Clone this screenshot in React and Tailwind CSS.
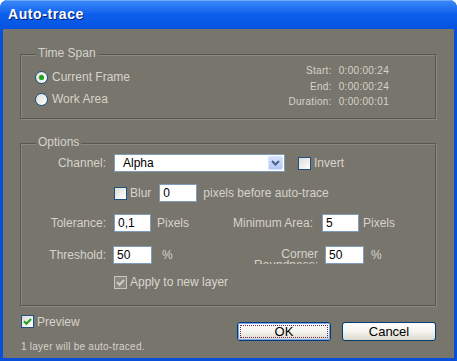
import React from "react";

const F = { fontFamily: '"Liberation Sans", Arial, sans-serif' };

function Radio({ checked }) {
  return (
    <div className="w-[13px] h-[13px] rounded-full border border-[#1c5180] bg-gradient-to-br from-[#dcdcd7] to-white flex items-center justify-center shrink-0">
      {checked && <div className="w-[5px] h-[5px] rounded-full bg-[#21a121] shadow-[0_0_1px_#6ad66a]" />}
    </div>
  );
}

function Check({ checked, disabled }) {
  if (disabled) {
    return (
      <div className="w-[13px] h-[13px] border border-[#c9c6bd] bg-[#8b887f] flex items-center justify-center shrink-0">
        <svg width="9" height="9" viewBox="0 0 9 9">
          <path d="M1 4.2 L3.5 6.7 L8 2" fill="none" stroke="#cfccc3" strokeWidth="2" />
        </svg>
      </div>
    );
  }
  return (
    <div className="w-[13px] h-[13px] border border-[#1c5180] bg-gradient-to-br from-[#dcdcd7] to-white flex items-center justify-center shrink-0">
      {checked && (
        <svg width="9" height="9" viewBox="0 0 9 9">
          <path d="M1 4.2 L3.5 6.7 L8 2" fill="none" stroke="#21a121" strokeWidth="2" />
        </svg>
      )}
    </div>
  );
}

function Input({ value, w }) {
  return (
    <div
      className={`h-[18px] bg-white border border-[#7f9db9] text-black text-[12px] leading-[16px] pl-[3px] shrink-0 ${w}`}
    >
      {value}
    </div>
  );
}

function Btn({ children, def }) {
  return (
    <div className="w-[94px] h-[19px] rounded-[3px] border border-[#003c74] bg-gradient-to-b from-white via-[#f4f3ee] to-[#dcd9cc] text-black text-[13px] flex items-center justify-center relative">
      {def && (
        <div className="absolute inset-0 rounded-[2px] shadow-[inset_0_0_0_1px_#7aa6ee]">
          <div className="absolute inset-[2px] border border-dotted border-[#6b2a4a]" />
        </div>
      )}
      <span className="relative leading-none">{children}</span>
    </div>
  );
}

export default function App() {
  return (
    <div className="w-[457px] h-[361px] bg-white" style={F}>
      <div className="w-[457px] h-[361px] rounded-t-[8px] bg-[#0a4fd9] flex flex-col overflow-hidden">
        {/* title bar */}
        <div className="h-[29px] shrink-0 bg-gradient-to-b from-[#3d8af7] via-[#0b5fec] to-[#0553e0] flex items-center pl-[8px] shadow-[inset_0_1px_0_#6fa8ff]">
          <span className="text-white font-bold text-[14px] tracking-[0.6px] [text-shadow:1px_1px_0_#0a1e6e]">
            Auto-trace
          </span>
        </div>
        {/* body */}
        <div className="flex-1 mx-[3px] mb-[3px] bg-[#78756d] text-[#d6d3cb] text-[12px] flex flex-col">
          {/* Time span */}
          <div className="relative ml-[17px] mt-[25px] w-[416px] h-[65px] border border-[#5a5750] shadow-[inset_1px_1px_0_#8b887f,1px_1px_0_#8b887f] flex justify-between">
            <span className="absolute top-[-10px] left-[15px] px-[2px] bg-[#78756d] text-[12px] leading-[16px]">
              Time Span
            </span>
            <div className="pl-[14px] pt-[11px] flex flex-col">
              <div className="h-[22px] flex items-center gap-[4px]">
                <Radio checked />
                <span>Current Frame</span>
              </div>
              <div className="h-[22px] flex items-center gap-[4px]">
                <Radio />
                <span>Work Area</span>
              </div>
            </div>
            <div className="pt-[8px] pr-[46px] grid grid-cols-[auto_auto] gap-x-[7px] text-[10px] tracking-[0.3px] auto-rows-[15.5px] items-center">
              <span className="text-right">Start:</span>
              <span>0:00:00:24</span>
              <span className="text-right">End:</span>
              <span>0:00:00:24</span>
              <span className="text-right">Duration:</span>
              <span>0:00:00:01</span>
            </div>
          </div>
          {/* Options */}
          <div className="relative ml-[17px] mt-[24px] w-[416px] h-[163px] border border-[#5a5750] shadow-[inset_1px_1px_0_#8b887f,1px_1px_0_#8b887f] flex flex-col">
            <span className="absolute top-[-10px] left-[15px] px-[2px] bg-[#78756d] text-[12px] leading-[16px]">
              Options
            </span>
            {/* Channel */}
            <div className="mt-[10px] h-[18px] flex items-center">
              <span className="w-[85px] text-right">Channel:</span>
              <div className="ml-[8px] w-[171px] h-[18px] bg-white border border-[#7f9db9] flex items-center justify-between pl-[8px] pr-[1px]">
                <span className="text-black text-[12px]">Alpha</span>
                <div className="w-[15px] h-[14px] rounded-[2px] bg-gradient-to-b from-[#d6e2fd] to-[#b4c8f6] border border-[#d9e3f9] flex items-center justify-center">
                  <svg width="9" height="6" viewBox="0 0 9 6">
                    <path d="M1 1 L4.5 4.5 L8 1" fill="none" stroke="#4d6185" strokeWidth="2" />
                  </svg>
                </div>
              </div>
              <div className="ml-[13px] flex items-center gap-[3px]">
                <Check />
                <span>Invert</span>
              </div>
            </div>
            {/* Blur */}
            <div className="mt-[12px] h-[18px] flex items-center pl-[93px]">
              <Check />
              <span className="ml-[3px]">Blur</span>
              <Input value="0" w="w-[38px] ml-[8px]" />
              <span className="ml-[6px]">pixels before auto-trace</span>
            </div>
            {/* Tolerance */}
            <div className="mt-[12px] h-[18px] flex items-center">
              <span className="w-[85px] text-right">Tolerance:</span>
              <Input value="0,1" w="w-[37px] ml-[8px]" />
              <span className="ml-[6px] w-[43px]">Pixels</span>
              <span className="w-[113px] text-right">Minimum Area:</span>
              <Input value="5" w="w-[37px] ml-[9px]" />
              <span className="ml-[4px]">Pixels</span>
            </div>
            {/* Threshold */}
            <div className="mt-[14px] h-[18px] flex items-start">
              <span className="w-[85px] text-right self-center">Threshold:</span>
              <Input value="50" w="w-[39px] ml-[7px]" />
              <span className="ml-[10px] w-[44px] self-center">%</span>
              <div className="w-[112px] h-[18px] overflow-hidden leading-[11px] pt-[3px]">
                <div className="w-[70px] ml-auto text-right">Corner Roundness:</div>
              </div>
              <Input value="50" w="w-[39px] ml-[7px]" />
              <span className="ml-[7px] self-center">%</span>
            </div>
            {/* Apply */}
            <div className="mt-[9px] h-[18px] flex items-center pl-[93px]">
              <Check checked disabled />
              <span className="ml-[3px] text-[#dad7d0]">Apply to new layer</span>
            </div>
          </div>
          {/* bottom */}
          <div className="flex justify-between ml-[18px] mr-[18px]">
            <div className="flex flex-col">
              <div className="mt-[9px] h-[13px] flex items-center gap-[3px]">
                <Check checked />
                <span>Preview</span>
              </div>
              <div className="mt-[13px] text-[10px] tracking-[0.25px] leading-[12px]">
                1 layer will be auto-traced.
              </div>
            </div>
            <div className="mt-[16px] flex gap-[11px]">
              <Btn def>OK</Btn>
              <Btn>Cancel</Btn>
            </div>
          </div>
        </div>
      </div>
    </div>
  );
}
